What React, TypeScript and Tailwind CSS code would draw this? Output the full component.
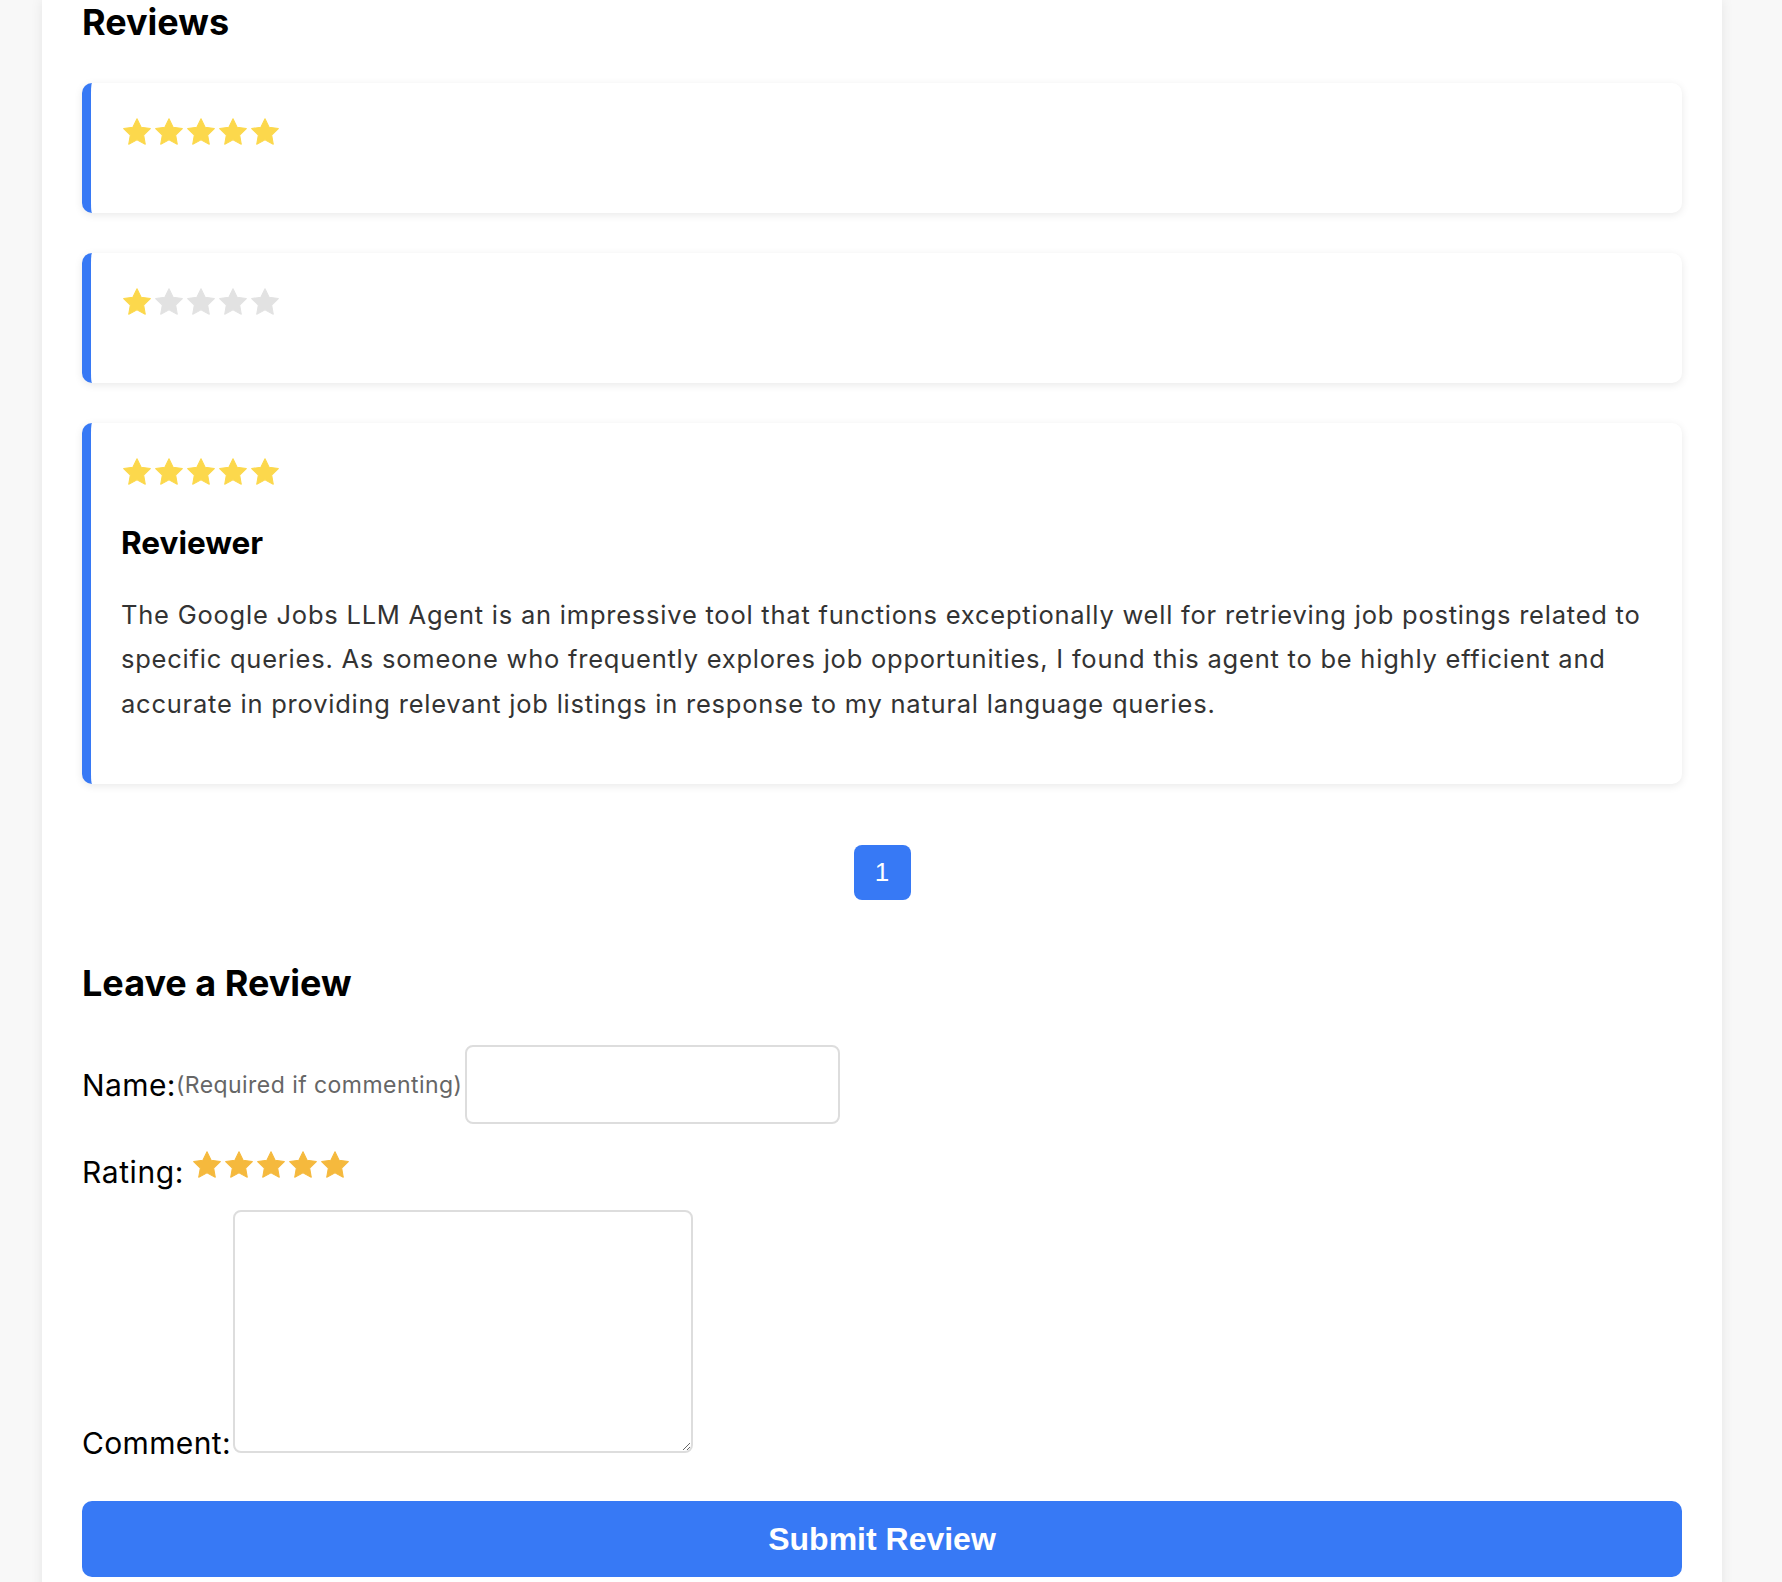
import React from "react";

const STAR_POINTS =
  "12,2 15.09,8.26 22,9.27 17,14.14 18.18,21.02 12,17.77 5.82,21.02 7,14.14 2,9.27 8.91,8.26";

function Star({ color }: { color: string }) {
  return (
    <svg width={28} height={27} viewBox="1.5 1.5 21 20" className="block shrink-0">
      <polygon points={STAR_POINTS} fill={color} stroke={color} strokeWidth={0.8} strokeLinejoin="round" />
    </svg>
  );
}

function Stars({ filled, on, off }: { filled: number; on: string; off: string }) {
  return (
    <div className="flex gap-[4px]">
      {[0, 1, 2, 3, 4].map((i) => (
        <Star key={i} color={i < filled ? on : off} />
      ))}
    </div>
  );
}

const inter = { fontFamily: "Inter, 'Noto Sans', sans-serif" };
const arial = { fontFamily: "'Liberation Sans', Arial, sans-serif" };

function ReviewCard({
  rating,
  name,
  text,
}: {
  rating: number;
  name?: string;
  text?: string;
}) {
  return (
    <div className="rounded-[10px] border-l-[9px] border-l-[#3779f5] bg-white px-[30px] pt-[30px] pb-[30px] shadow-[0_2px_8px_rgba(0,0,0,0.09)]">
      <div className="h-[37px] pt-[5px] pl-[2px]">
        <Stars filled={rating} on="#fcd84c" off="#e2e2e2" />
      </div>
      {name ? (
        <>
          <h3 className="mt-[35px] text-[31.5px] leading-[36px] font-bold text-black">{name}</h3>
          <p className="mt-[31.7px] mb-[28px] text-[25.5px] leading-[44.5px] tracking-[0.77px] text-[#333]">{text}</p>
        </>
      ) : (
        <div className="h-[33px]" />
      )}
    </div>
  );
}

export default function App() {
  return (
    <div className="min-h-screen bg-[#f8f8f8]" style={inter}>
      <div className="ml-[42px] w-[1680px] bg-white px-[40px] pt-[1px] pb-[40px] shadow-[0_0_12px_rgba(0,0,0,0.08)]">
        <h2 className="text-[36px] leading-[42px] font-bold text-black">Reviews</h2>

        <div className="mt-[40px] flex flex-col gap-[40px]">
          <ReviewCard rating={5} />
          <ReviewCard rating={1} />
          <ReviewCard
            rating={5}
            name="Reviewer"
            text="The Google Jobs LLM Agent is an impressive tool that functions exceptionally well for retrieving job postings related to specific queries. As someone who frequently explores job opportunities, I found this agent to be highly efficient and accurate in providing relevant job listings in response to my natural language queries."
          />
        </div>

        <div className="mt-[61px] flex justify-center">
          <button
            className="flex h-[55px] w-[57px] items-center justify-center rounded-[8px] bg-[#3779f5] text-[26px] text-white"
            style={arial}
          >
            1
          </button>
        </div>

        <h2 className="mt-[62px] text-[36px] leading-[42px] font-bold text-black">Leave a Review</h2>

        <div className="mt-[41px] flex items-center">
          <span className="text-[30px] leading-[36px] tracking-[0.4px] text-black">Name:</span>
          <span className="text-[23px] leading-[36px] tracking-[0.45px] text-[#666]">(Required if commenting)</span>
          <input
            type="text"
            className="ml-[3px] h-[79px] w-[375px] rounded-[8px] border-2 border-[#dddddd] bg-white outline-none"
          />
        </div>

        <div className="mt-[22px] flex items-start">
          <span className="mt-[8px] text-[30px] leading-[36px] tracking-[0.6px] text-black">Rating:</span>
          <div className="mt-[4.7px] ml-[9px]">
            <Stars filled={5} on="#f5b93d" off="#e2e2e2" />
          </div>
        </div>

        <div className="mt-[20px] flex items-end">
          <span className="mb-[-4.5px] text-[30px] leading-[30px] tracking-[0.35px] text-black">Comment:</span>
          <textarea className="ml-[2px] h-[243px] w-[460px] rounded-[8px] border-2 border-[#dddddd] bg-white outline-none" />
        </div>

        <button
          className="mt-[48px] flex h-[76px] w-full items-center justify-center rounded-[10px] bg-[#3779f5] text-[32px] font-bold text-white"
          style={arial}
        >
          Submit Review
        </button>
      </div>
    </div>
  );
}
